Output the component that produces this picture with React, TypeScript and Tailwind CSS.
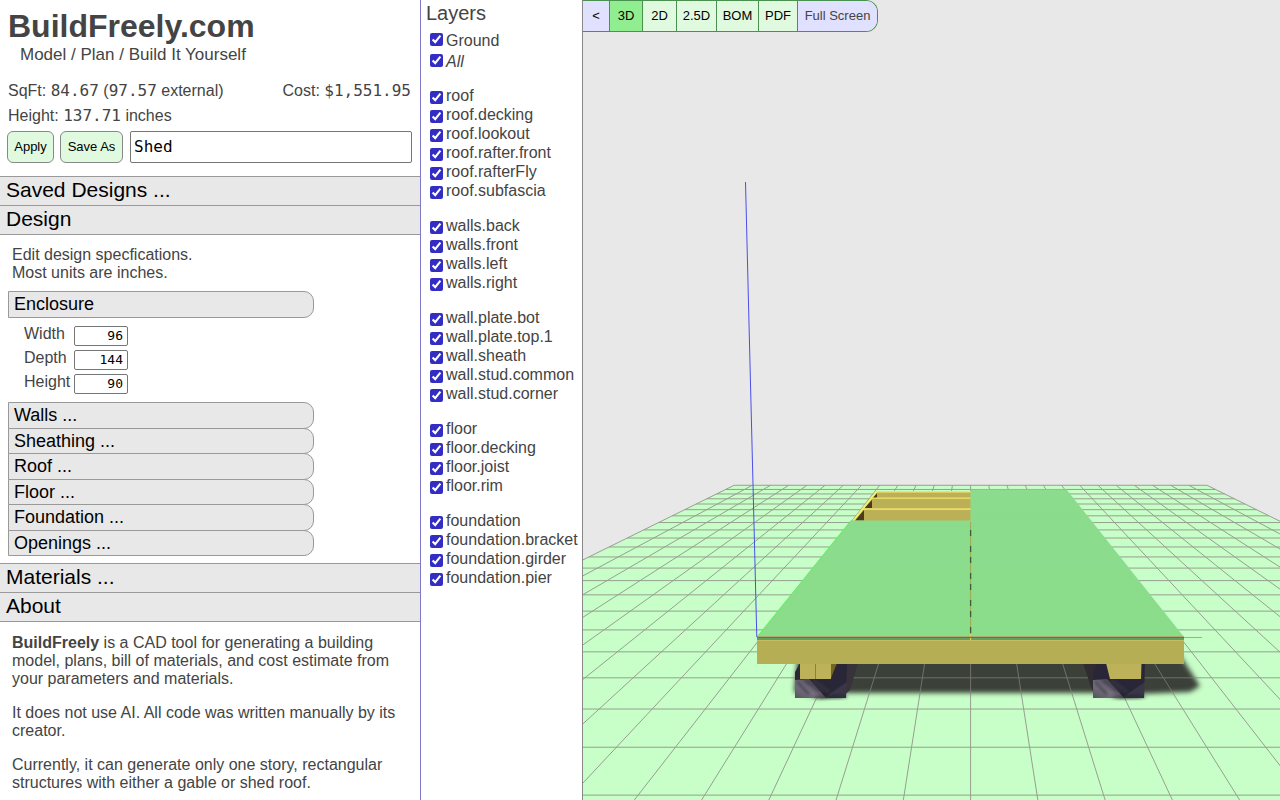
import { useState } from "react";
import clsx from "clsx";

const LAYER_GROUPS = [
  ["roof", "roof.decking", "roof.lookout", "roof.rafter.front", "roof.rafterFly", "roof.subfascia"],
  ["walls.back", "walls.front", "walls.left", "walls.right"],
  ["wall.plate.bot", "wall.plate.top.1", "wall.sheath", "wall.stud.common", "wall.stud.corner"],
  ["floor", "floor.decking", "floor.joist", "floor.rim"],
  ["foundation", "foundation.bracket", "foundation.girder", "foundation.pier"],
];

const ALL_LAYERS = LAYER_GROUPS.flat();

const DESIGN_SECTIONS = ["Walls", "Sheathing", "Roof", "Floor", "Foundation", "Openings"];

const DIMENSIONS = [
  { id: "width", label: "Width", value: "96" },
  { id: "depth", label: "Depth", value: "144" },
  { id: "height", label: "Height", value: "90" },
];

const VIEWS = [
  { name: "3D", width: "w-[33px]" },
  { name: "2D", width: "w-[34px]" },
  { name: "2.5D", width: "w-[40px]" },
  { name: "BOM", width: "w-[42px]" },
  { name: "PDF", width: "w-[39px]" },
];

// ground grid: everything converges on the vanishing point
const VP_X = 970.6;
const VP_Y = 368.6;
const FAR_Y = 485.3;
const NEAR_Y = 850;
const CELL = 0.1559;

const gridX = (k: number, y: number) => VP_X + k * CELL * (y - VP_Y);
const rowY = (j: number) => VP_Y + 1 / (0.008571 - j * 0.0002965);

function SectionBar({ title }: { title: string }) {
  return (
    <button
      type="button"
      className="-mt-px block h-[30px] w-full border-y border-[#999] bg-[#e8e8e8] px-[6px] pb-[2px] text-left text-[21px] leading-[26px] text-black"
    >
      {title}
    </button>
  );
}

function SubSectionBar({ title, className }: { title: string; className?: string }) {
  return (
    <button
      type="button"
      className={clsx(
        "block w-full rounded-r-[10px] border border-[#999] bg-[#e8e8e8] px-[5px] text-left text-[18px] leading-6 text-black",
        className
      )}
    >
      {title}
    </button>
  );
}

function Pier({ x }: { x: number }) {
  return (
    <g>
      <polygon points={`${x},672 ${x + 5},663 ${x + 52},663 ${x + 51},698 ${x},698`} fill="#292737" />
      <polygon points={`${x},680 ${x + 14},679 ${x + 31},698 ${x},698`} fill="url(#pierLight)" />
      <polygon points={`${x + 30},697 ${x + 52},682 ${x + 51},698 ${x + 30},698`} fill="#45424f" opacity="0.6" />
      <path
        d={`M${x + 2} 682 L${x + 14} 694 M${x + 10} 680 L${x + 26} 692 M${x + 18} 680 L${x + 34} 692`}
        stroke="#3b3747"
        strokeWidth="2.5"
        opacity="0.8"
        filter="url(#soft)"
      />
      <ellipse cx={x + 36} cy="697" rx="17" ry="2" fill="#20202c" opacity="0.6" filter="url(#soft)" />
    </g>
  );
}

function Scene() {
  const columns = Array.from({ length: 27 }, (_, i) => i - 13);
  const rows = Array.from({ length: 22 }, (_, i) => i);

  return (
    <svg
      viewBox="583 0 697 800"
      preserveAspectRatio="xMidYMax slice"
      className="block h-full w-full"
      role="img"
      aria-label="3D model"
    >
      <defs>
        <filter id="shadow" x="-10%" y="-30%" width="120%" height="160%">
          <feGaussianBlur stdDeviation="2.5" />
        </filter>
        <filter id="soft" x="-30%" y="-50%" width="160%" height="200%">
          <feGaussianBlur stdDeviation="1.5" />
        </filter>
        <linearGradient id="pierLight" x1="0" y1="1" x2="1" y2="0">
          <stop offset="0" stopColor="#55515e" />
          <stop offset="0.4" stopColor="#77717f" />
          <stop offset="1" stopColor="#302c3b" />
        </linearGradient>
        <linearGradient id="deck" x1="0" y1="0" x2="0" y2="1">
          <stop offset="0" stopColor="#8cdb8e" />
          <stop offset="1" stopColor="#8add8a" />
        </linearGradient>
      </defs>

      {/* ground */}
      <polygon
        points={`${gridX(-13, FAR_Y)},${FAR_Y} ${gridX(13, FAR_Y)},${FAR_Y} ${gridX(13, NEAR_Y)},${NEAR_Y} ${gridX(-13, NEAR_Y)},${NEAR_Y}`}
        fill="#c8ffc8"
      />
      <polygon
        points="798,655 1180,655 1200,686 1190,692 1140,694 1120,697 1098,693 842,693 820,698 794,692"
        fill="#3a3f38"
        filter="url(#shadow)"
      />
      <g stroke="#857f7d" strokeWidth="1" opacity="0.75">
        {columns.map((k) => (
          <line key={k} x1={gridX(k, FAR_Y)} y1={FAR_Y} x2={gridX(k, NEAR_Y)} y2={NEAR_Y} />
        ))}
        {rows.map((j) => (
          <line key={j} x1={gridX(-13, rowY(j))} y1={rowY(j)} x2={gridX(13, rowY(j))} y2={rowY(j)} />
        ))}
      </g>

      {/* foundation */}
      <polygon points="838,663 858,663 850,690 842,697" fill="#38323a" />
      <polygon points="1083,663 1106,663 1096,694 1092,690" fill="#312c31" />
      <Pier x={795} />
      <Pier x={1093} />
      <polygon points="831,663 837,663 831,678" fill="#75651e" />
      <rect x="800" y="663" width="31" height="16" fill="#bdb159" />
      <path d="M815.5 664 V679" stroke="#8a8040" />
      <polygon points="1106,663 1141.5,663 1141,679 1110,679" fill="#bdb159" />

      {/* rim and deck edge */}
      <rect x="757" y="637" width="427" height="27" fill="#b6ae55" />
      <rect x="757" y="637" width="427" height="3" fill="#60a060" />
      <path d="M757 640.5 H1184" stroke="#c5bd62" />

      {/* open joists */}
      <polygon points="877,491 971,491 971,521 853,521" fill="#bbb057" />
      <polygon points="877,493 877,498 872.5,498" fill="#4a3c1a" />
      <polygon points="872,500 872,508 864,508" fill="#4a3c1a" />
      <polygon points="864,510 864,520.5 855,520.5" fill="#4a3c1a" />
      <g fill="#f2e264">
        <rect x="876" y="491" width="95" height="1.6" />
        <rect x="871" y="497.5" width="100" height="1.3" />
        <rect x="863" y="508.3" width="108" height="1.6" />
      </g>
      <path d="M877 491 L853.5 520.5" stroke="#f5ef63" strokeWidth="2" />

      {/* decking */}
      <polygon points="757,637 851,520.5 970.5,520.5 970.5,489.5 1066.5,489.5 1184,637" fill="url(#deck)" />
      <path d="M757 637 L851 520.5" stroke="#5df25d" />
      <path d="M970.6 522 V637" stroke="#9fa84f" />
      <path d="M970.6 530 V634" stroke="#375f39" strokeWidth="1.3" strokeDasharray="6 10 6 5" />
      <path d="M970.6 634 V640" stroke="#e0dc5c" />

      {/* axes */}
      <path d="M757 637.5 H1184" stroke="#7b6a4a" />
      <path d="M1184 637.5 H1202" stroke="#ec8c7c" />
      <path d="M757 636.5 H1184" stroke="#c98a5c" strokeWidth="0.6" />
      <path d="M745.5 182 L756.8 637" stroke="#4a4ee8" />
    </svg>
  );
}

export default function App() {
  const [name, setName] = useState("Shed");
  const [dims, setDims] = useState<Record<string, string>>(
    Object.fromEntries(DIMENSIONS.map((d) => [d.id, d.value]))
  );
  const [view, setView] = useState("3D");
  const [ground, setGround] = useState(true);
  const [hidden, setHidden] = useState<string[]>([]);

  function toggleLayer(layer: string) {
    setHidden((prev) => (prev.includes(layer) ? prev.filter((l) => l !== layer) : [...prev, layer]));
  }

  return (
    <main className="flex h-screen overflow-hidden bg-white font-['Liberation_Sans',sans-serif] text-base leading-[18px] text-[#444]">
      {/* Parameters */}
      <div className="w-[420px] shrink-0 overflow-hidden">
        <header className="pt-2 pr-[9px] pl-2">
          <h1 className="text-[32px] font-bold leading-[37px]">BuildFreely.com</h1>
          <p className="pl-3 text-[17px] leading-5">Model / Plan / Build It Yourself</p>
          <div className="mt-[13px] flex justify-between leading-[25px]">
            <p>
              SqFt: <span className="font-['DejaVu_Sans_Mono',monospace]">84.67</span> (
              <span className="font-['DejaVu_Sans_Mono',monospace]">97.57</span> external)
            </p>
            <p>
              Cost: <span className="font-['DejaVu_Sans_Mono',monospace]">$1,551.95</span>
            </p>
          </div>
          <p className="leading-[25px]">
            Height: <span className="font-['DejaVu_Sans_Mono',monospace]">137.71</span> inches
          </p>
        </header>

        <div className="mt-[3px] mb-[14px] flex h-8 gap-[6px] pr-2 pl-[7px]">
          <button type="button" className="w-[47px] rounded-md border border-[#888] bg-[#e0fae0] text-[13px] text-black">
            Apply
          </button>
          <button type="button" className="w-[63px] rounded-md border border-[#888] bg-[#e0fae0] text-[13px] text-black">
            Save As
          </button>
          <input
            aria-label="Design name"
            value={name}
            onChange={(e) => setName(e.target.value)}
            className="ml-px min-w-0 flex-1 rounded-xs border border-[#767676] bg-white px-[3px] font-['DejaVu_Sans_Mono',monospace] text-base text-black"
          />
        </div>

        <SectionBar title="Saved Designs ..." />
        <SectionBar title="Design" />
        <div className="mb-[9px] px-2 pt-[11px]">
          <p className="px-1">
            Edit design specfications.
            <br />
            Most units are inches.
          </p>
          <div className="mt-[9px] w-[306px]">
            <SubSectionBar title="Enclosure" className="h-[27px] pb-px" />
            <div className="my-2 flex flex-col gap-1 pl-4">
              {DIMENSIONS.map((d) => (
                <div key={d.id} className="flex h-5">
                  <label htmlFor={d.id} className="w-[50px] leading-4">
                    {d.label}
                  </label>
                  <input
                    id={d.id}
                    value={dims[d.id]}
                    onChange={(e) => setDims({ ...dims, [d.id]: e.target.value })}
                    className="w-[54px] rounded-xs border border-[#767676] bg-white px-1 text-right font-['DejaVu_Sans_Mono',monospace] text-[13px] text-black"
                  />
                </div>
              ))}
            </div>
            <div className="grid h-[153px] grid-rows-6">
              {DESIGN_SECTIONS.map((s) => (
                <SubSectionBar key={s} title={`${s} ...`} className="-mb-px" />
              ))}
            </div>
          </div>
        </div>
        <SectionBar title="Materials ..." />
        <SectionBar title="About" />
        <div className="flex flex-col gap-4 px-3 pt-3">
          <p>
            <b>BuildFreely</b> is a CAD tool for generating a building model, plans, bill of materials, and cost
            estimate from your parameters and materials.
          </p>
          <p>It does not use AI. All code was written manually by its creator.</p>
          <p>Currently, it can generate only one story, rectangular structures with either a gable or shed roof.</p>
        </div>
      </div>

      {/* Layers */}
      <div className="w-[163px] shrink-0 overflow-hidden border-x border-l-[#8078c8] border-r-[#888] whitespace-nowrap">
        <h2 className="px-[5px] pt-px text-[20px] leading-6">Layers</h2>
        <div className="mt-[6px] px-[9px] leading-[19px]">
          <label className="flex h-[21px] gap-[3px]">
            <input
              type="checkbox"
              checked={ground}
              onChange={() => setGround(!ground)}
              className="mt-0.5 size-[13px] accent-[#332dc4]"
            />
            Ground
          </label>
          <label className="flex h-[21px] gap-[3px] italic">
            <input
              type="checkbox"
              checked={hidden.length === 0}
              onChange={() => setHidden(hidden.length === 0 ? ALL_LAYERS : [])}
              className="mt-0.5 size-[13px] accent-[#332dc4]"
            />
            All
          </label>
        </div>
        <div className="mt-[14px] flex flex-col gap-4 pl-[9px] leading-[17px]">
          {LAYER_GROUPS.map((group) => (
            <div key={group[0]}>
              {group.map((layer) => (
                <label key={layer} className="flex h-[19px] gap-[3px]">
                  <input
                    type="checkbox"
                    checked={!hidden.includes(layer)}
                    onChange={() => toggleLayer(layer)}
                    className="mt-1 size-[13px] shrink-0 accent-[#332dc4]"
                  />
                  {layer}
                </label>
              ))}
            </div>
          ))}
        </div>
      </div>

      {/* Viewport */}
      <div className="relative min-w-0 flex-1 bg-[#e8e8e8]">
        <Scene />
        <div className="absolute top-0 left-0 flex h-8 overflow-hidden rounded-r-xl border border-l-0 border-[#4a9150] text-[13px] text-black">
          <button type="button" className="w-[26px] bg-[#e0e0ff]">
            &lt;
          </button>
          {VIEWS.map((v) => (
            <button
              key={v.name}
              type="button"
              onClick={() => setView(v.name)}
              className={clsx("border-l border-[#4a9150]", v.width, view === v.name ? "bg-[#90ee90]" : "bg-[#e0fae0]")}
            >
              {v.name}
            </button>
          ))}
          <button type="button" className="w-[80px] border-l border-[#4a9150] bg-[#e0e0ff] text-[#444]">
            Full Screen
          </button>
        </div>
      </div>
    </main>
  );
}
